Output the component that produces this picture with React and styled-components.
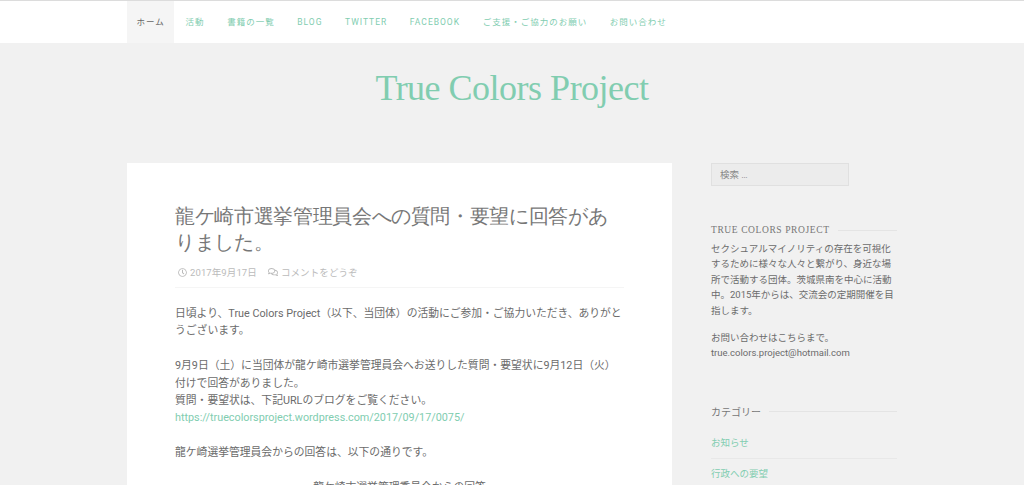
import React from 'react'
import styled, { createGlobalStyle } from 'styled-components'
import { FaRegClock, FaRegComments } from 'react-icons/fa'

const GlobalStyle = createGlobalStyle`
    html, body {
        margin: 0;
        padding: 0;
        height: 485px;
        overflow: hidden;
        background-color: #f1f1f1;
        font-family: Roboto, "Noto Sans CJK JP", sans-serif;
        color: #666;
    }
    a {
        color: #81cdb0;
        text-decoration: none;
    }
`

const Nav = styled.nav`
    height: 42px;
    background-color: white;
    border-top: 1px solid #dcdcdc;
`

const NavInner = styled.ul`
    width: 770px;
    margin: 0 auto;
    padding: 0;
    display: flex;
    list-style: none;
`

const NavItem = styled.li`
    height: 42px;
    padding: 0 ${props => props.$pad || 11.3}px;
    display: flex;
    align-items: center;
    font-size: 8.5px;
    line-height: 12px;
    letter-spacing: 1px;
    background-color: ${props => props.$active ? '#f5f5f5' : 'transparent'};
    color: ${props => props.$active ? '#666' : '#81cdb0'};
`

const Brand = styled.h1`
    margin: 0;
    height: 120px;
    padding-bottom: 30px;
    box-sizing: border-box;
    display: flex;
    align-items: center;
    justify-content: center;
    font-family: "Liberation Serif", serif;
    font-weight: 400;
    font-size: 36px;
    letter-spacing: -0.5px;
    color: #81cdb0;
`

const Page = styled.div`
    width: 770px;
    margin: 0 auto;
    display: flex;
    justify-content: space-between;
    align-items: flex-start;
`

const Card = styled.article`
    width: 449px;
    padding: 41px 48px 0;
    background-color: white;
`

const Title = styled.h2`
    margin: 0;
    font-family: "Liberation Serif", serif;
    font-weight: 400;
    font-size: 19.6px;
    line-height: 26px;
    letter-spacing: -0.35px;
    color: #777;
`

const Meta = styled.div`
    margin-top: 9px;
    padding-bottom: 8px;
    display: flex;
    align-items: center;
    gap: 8px;
    border-bottom: 1px solid #f5f5f5;
    font-size: 9.5px;
    letter-spacing: 0.1px;
    color: #bbb;
`

const MetaItem = styled.span`
    display: flex;
    align-items: center;
    gap: 3px;
    padding-left: 3px;
`

const Body = styled.div`
    margin-top: 17px;
    font-size: 10.8px;
    line-height: 17.4px;
    color: #6b6b6b;
`

const Para = styled.p`
    margin: 0 0 17.4px;
    text-align: ${props => props.$center ? 'center' : 'left'};
`

const Sidebar = styled.aside`
    width: 186px;
`

const SearchBox = styled.input`
    display: block;
    box-sizing: border-box;
    width: 138px;
    height: 23px;
    padding: 0 8px;
    border: 1px solid #e0e0e0;
    background-color: #ececec;
    font-family: inherit;
    font-size: 9.5px;
    color: #666;
    &::placeholder {
        color: #888;
        opacity: 1;
    }
`

const WidgetTitle = styled.h3`
    margin: ${props => props.$top}px 0 0;
    display: flex;
    align-items: center;
    gap: 8px;
    font-family: ${props => props.$serif ? '"Liberation Serif", serif' : 'inherit'};
    font-weight: 400;
    font-size: ${props => props.$serif ? 9.5 : 10}px;
    letter-spacing: ${props => props.$serif ? 0.6 : 0}px;
    color: #777;
    &::after {
        content: '';
        flex: 1;
        height: 1px;
        background-color: #e4e4e4;
    }
`

const WidgetText = styled.p`
    margin: ${props => props.$top}px 0 0;
    font-size: 9.5px;
    line-height: 15.4px;
    color: #6b6b6b;
`

const CategoryList = styled.ul`
    margin: 9px 0 0;
    padding: 0;
    list-style: none;
`

const CategoryItem = styled.li`
    padding: 7px 0 8px;
    font-size: 9.5px;
    line-height: 15px;
    border-bottom: 1px solid #e8e8e8;
    &:last-child {
        border-bottom: none;
    }
`

const navItems = ['活動', '書籍の一覧', 'BLOG', 'TWITTER', 'FACEBOOK', 'ご支援・ご協力のお願い', 'お問い合わせ']

const App = () => {
    return (
        <>
            <GlobalStyle />
            <Nav>
                <NavInner>
                    <NavItem $active $pad={9.5}>ホーム</NavItem>
                    {navItems.map(item => <NavItem key={item}>{item}</NavItem>)}
                </NavInner>
            </Nav>
            <Brand>True Colors Project</Brand>
            <Page>
                <Card>
                    <Title>龍ケ崎市選挙管理員会への質問・要望に回答がありました。</Title>
                    <Meta>
                        <MetaItem><FaRegClock size={9} />2017年9月17日</MetaItem>
                        <MetaItem><FaRegComments size={10} />コメントをどうぞ</MetaItem>
                    </Meta>
                    <Body>
                        <Para>日頃より、True Colors Project（以下、当団体）の活動にご参加・ご協力いただき、ありがとうございます。</Para>
                        <Para>
                            9月9日（土）に当団体が龍ケ崎市選挙管理員会へお送りした質問・要望状に9月12日（火）付けで回答がありました。<br />
                            質問・要望状は、下記URLのブログをご覧ください。<br />
                            <a href="#">https://truecolorsproject.wordpress.com/2017/09/17/0075/</a>
                        </Para>
                        <Para>龍ケ崎選挙管理員会からの回答は、以下の通りです。</Para>
                        <Para $center>龍ケ崎市選挙管理委員会からの回答</Para>
                    </Body>
                </Card>
                <Sidebar>
                    <SearchBox placeholder="検索 …" />
                    <WidgetTitle $serif $top={39}>TRUE COLORS PROJECT</WidgetTitle>
                    <WidgetText $top={6}>セクシュアルマイノリティの存在を可視化するために様々な人々と繋がり、身近な場所で活動する団体。茨城県南を中心に活動中。2015年からは、交流会の定期開催を目指します。</WidgetText>
                    <WidgetText $top={12}>お問い合わせはこちらまで。<br />true.colors.project@hotmail.com</WidgetText>
                    <WidgetTitle $top={43}>カテゴリー</WidgetTitle>
                    <CategoryList>
                        <CategoryItem><a href="#">お知らせ</a></CategoryItem>
                        <CategoryItem><a href="#">行政への要望</a></CategoryItem>
                    </CategoryList>
                </Sidebar>
            </Page>
        </>
    )
}

export default App
